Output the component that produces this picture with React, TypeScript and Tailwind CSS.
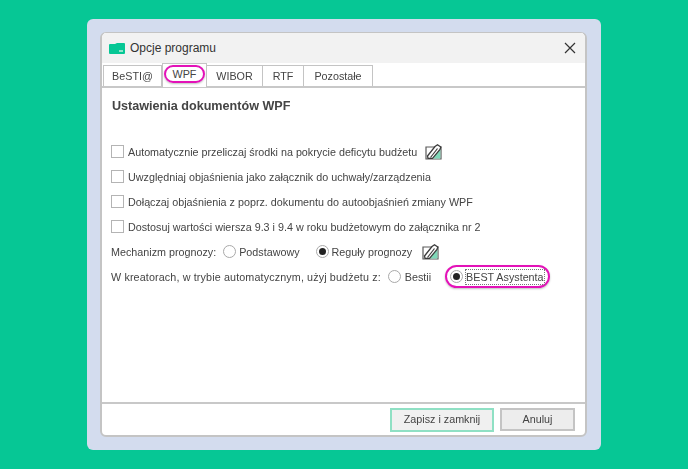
import React from 'react';

const EditIcon: React.FC = () => (
  <svg width="17" height="16" viewBox="0 0 17 16" className="shrink-0">
    <path d="M1 3 L1 15 L16 15 L16 3 Z" fill="#fff" stroke="#5a5a5a" strokeWidth="1.2" />
    <path d="M7 14.4 L15.4 4 L15.4 14.4 Z" fill="#7fd8b8" />
    <path d="M2.5 12 L10 2.5 L12.5 0.8 L15.8 3 L15 5.5 L7.5 14.4 L3 14.4 Z" fill="#fff" stroke="#3c3c3c" strokeWidth="1.3" />
    <path d="M5.5 13.5 L12.5 4.5" stroke="#3c3c3c" strokeWidth="1.2" />
  </svg>
);

const Check: React.FC<{ label: string; icon?: boolean }> = ({ label, icon }) => (
  <div className="flex h-[25px] items-center">
    <span className="h-[13px] w-[13px] shrink-0 border border-[#b4b4b4] bg-white" />
    <span className="ml-[4px] whitespace-nowrap pt-[2px]">{label}</span>
    {icon && <span className="ml-[8px]"><EditIcon /></span>}
  </div>
);

const Radio: React.FC<{ on?: boolean }> = ({ on }) => (
  <span className="flex h-[13px] w-[13px] shrink-0 items-center justify-center rounded-full border border-[#a8a8a8] bg-white">
    {on && <span className="h-[7px] w-[7px] rounded-full bg-[#222]" />}
  </span>
);

export default function App() {
  return (
    <div className="h-[469px] w-[688px] overflow-hidden bg-[#06c795] pl-[87px] pt-[19px] font-['Liberation_Sans',sans-serif] text-[10.75px] text-[#444]">
      <div className="h-[431px] w-[514px] rounded-[6px] bg-[#d3dcee] pl-[13px] pt-[13px]">
        <div className="flex h-[405px] w-[487px] flex-col overflow-hidden rounded-[6px] border-b-2 border-l-2 border-r-2 border-t border-[#c4c4c4] bg-white blur-[0.35px]">
          {/* title bar */}
          <div className="flex h-[30px] shrink-0 items-center bg-[#f2f2f2] pl-[7px] pr-[9px]">
            <svg width="16" height="11" viewBox="0 0 16 11">
              <path d="M0 2 Q0 1 1 1 L6 1 L8 0 L15 0 Q16 0 16 1 L16 10 Q16 11 15 11 L1 11 Q0 11 0 10 Z" fill="#06c795" />
              <rect x="10" y="7" width="4" height="2" fill="#8fe6cb" />
            </svg>
            <span className="ml-[5px] text-[12px] text-[#333]">Opcje programu</span>
            <svg width="12" height="12" viewBox="0 0 12 12" className="ml-auto">
              <path d="M1 1 L11 11 M11 1 L1 11" stroke="#333" strokeWidth="1.2" />
            </svg>
          </div>

          {/* tabs */}
          <div className="flex h-[23px] shrink-0 items-end pl-[1px]">
            <div className="flex h-[21px] w-[59px] items-center justify-center border border-b-0 border-[#c4c4c4]">BeSTI@</div>
            <div className="z-10 -mb-[1px] flex h-[24px] w-[45px] items-start justify-center border border-b-0 border-[#c4c4c4] bg-white pt-[1px]">
              <span className="flex h-[18px] w-[41px] items-center justify-center rounded-full border-2 border-[#e312b8] shadow-[0_1px_2px_rgba(0,0,0,0.25)]">WPF</span>
            </div>
            <div className="flex h-[21px] w-[56px] items-center justify-center border border-b-0 border-l-0 border-[#c4c4c4]">WIBOR</div>
            <div className="flex h-[21px] w-[41px] items-center justify-center border border-b-0 border-l-0 border-[#c4c4c4]">RTF</div>
            <div className="flex h-[21px] w-[69px] items-center justify-center border border-b-0 border-l-0 border-[#c4c4c4]">Pozostałe</div>
          </div>

          {/* content */}
          <div className="flex flex-1 flex-col border-b-2 border-t-2 border-[#c8c8c8] pl-[9px] pt-[10px]">
            <h1 className="ml-[1px] text-[12.6px] font-bold leading-[17px] text-[#444]">Ustawienia dokumentów WPF</h1>
            <div className="mt-[24px] flex flex-col">
              <Check label="Automatycznie przeliczaj środki na pokrycie deficytu budżetu" icon />
              <Check label="Uwzględniaj objaśnienia jako załącznik do uchwały/zarządzenia" />
              <Check label="Dołączaj objaśnienia z poprz. dokumentu do autoobjaśnień zmiany WPF" />
              <Check label="Dostosuj wartości wiersza 9.3 i 9.4 w roku budżetowym do załącznika nr 2" />
              <div className="flex h-[25px] items-center">
                <span className="pt-[2px]">Mechanizm prognozy:</span>
                <span className="ml-[7px]"><Radio /></span>
                <span className="ml-[3px] pt-[2px]">Podstawowy</span>
                <span className="ml-[16px]"><Radio on /></span>
                <span className="ml-[3px] pt-[2px]">Reguły prognozy</span>
                <span className="ml-[10px]"><EditIcon /></span>
              </div>
              <div className="flex h-[25px] items-center">
                <span className="pt-[2px] tracking-[0.13px]">W kreatorach, w trybie automatycznym, użyj budżetu z:</span>
                <span className="ml-[7px]"><Radio /></span>
                <span className="ml-[4px] pt-[2px]">Bestii</span>
                <span className="ml-[14px] flex h-[23px] w-[105px] shrink-0 items-center rounded-full border-2 border-[#e312b8] pl-[3px] shadow-[0_1px_2px_rgba(0,0,0,0.25)]">
                  <Radio on />
                  <span className="ml-[2px] whitespace-nowrap border border-dotted border-[#777] leading-[14px]">BEST Asystenta</span>
                </span>
              </div>
            </div>
          </div>

          {/* footer */}
          <div className="flex h-[31px] shrink-0 items-center justify-end gap-[6px] pr-[10px]">
            <button className="h-[24px] w-[104px] border-2 border-[#8fe0c4] bg-[#f0f0f0] text-[#444]">Zapisz i zamknij</button>
            <button className="h-[23px] w-[75px] border-2 border-[#c4c4c4] bg-[#ededed] text-[#444]">Anuluj</button>
          </div>
        </div>
      </div>
    </div>
  );
}
